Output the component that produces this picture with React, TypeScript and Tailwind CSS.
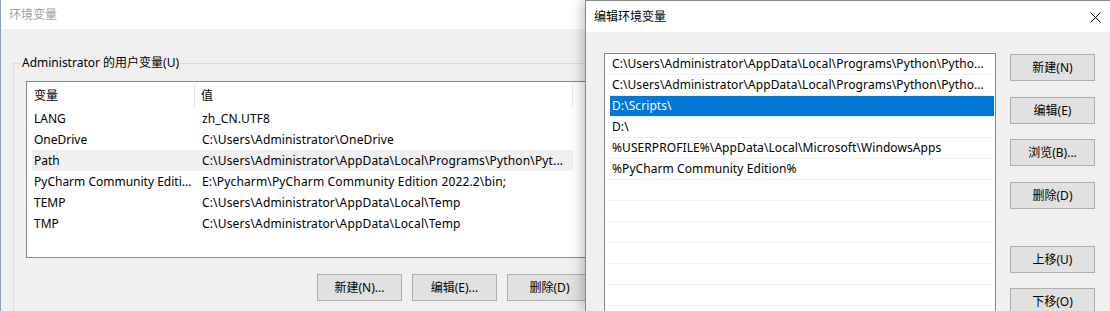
import React from 'react'

const font = { fontFamily: '"Noto Sans", "Noto Sans CJK SC", sans-serif' }

interface UserVar {
  name: string
  value: string
}

const userVars: UserVar[] = [
  { name: 'LANG', value: 'zh_CN.UTF8' },
  { name: 'OneDrive', value: 'C:\\Users\\Administrator\\OneDrive' },
  { name: 'Path', value: 'C:\\Users\\Administrator\\AppData\\Local\\Programs\\Python\\Pyt...' },
  { name: 'PyCharm Community Editi...', value: 'E:\\Pycharm\\PyCharm Community Edition 2022.2\\bin;' },
  { name: 'TEMP', value: 'C:\\Users\\Administrator\\AppData\\Local\\Temp' },
  { name: 'TMP', value: 'C:\\Users\\Administrator\\AppData\\Local\\Temp' },
]

const pathItems = [
  'C:\\Users\\Administrator\\AppData\\Local\\Programs\\Python\\Pytho...',
  'C:\\Users\\Administrator\\AppData\\Local\\Programs\\Python\\Pytho...',
  'D:\\Scripts\\',
  'D:\\',
  '%USERPROFILE%\\AppData\\Local\\Microsoft\\WindowsApps',
  '%PyCharm Community Edition%',
  '',
  '',
  '',
  '',
  '',
  '',
]

function WinButton({ label, className = '' }: { label: string; className?: string }) {
  return (
    <div
      className={`h-[27px] w-[85px] shrink-0 bg-[#e1e1e1] border border-[#adadad] text-[12px] text-black flex items-center justify-center ${className}`}
    >
      {label}
    </div>
  )
}

function EnvWindow() {
  return (
    <div className="absolute left-0 top-0 w-[640px] h-[311px] overflow-hidden border-l border-[#8fa2b5] flex flex-col">
      <div className="h-[29px] shrink-0 bg-white flex items-center pl-[8px] text-[12px] text-[#a0a0a0]">
        环境变量
      </div>
      <div className="flex-1 bg-[#f0f0f0] pl-[12px] pt-[34px] overflow-hidden">
        <div className="relative border-t border-l border-[#dcdcdc] h-[300px] pl-[12px] pt-[17px]">
          <span className="absolute left-[7px] top-[-9px] px-[1px] bg-[#f0f0f0] text-[12px] leading-[16px] text-black">
            Administrator 的用户变量(U)
          </span>
          <div className="w-[600px] h-[177px] border border-[#828790] bg-white">
            <div className="flex h-[26px] items-center pt-[1px]">
              <div className="w-[168px] h-[23px] pl-[7px] flex items-center border-r border-[#e5e5e5]">变量</div>
              <div className="w-[378px] h-[23px] pl-[6px] flex items-center border-r border-[#e5e5e5]">值</div>
            </div>
            {userVars.map((v) => (
              <div
                key={v.name}
                className={`flex h-[21px] items-center ml-[5px] w-[541px] ${v.name === 'Path' ? 'bg-[#f0f0f0]' : ''}`}
              >
                <div className="w-[170px] pl-[2px] whitespace-nowrap overflow-hidden">{v.name}</div>
                <div className="whitespace-nowrap overflow-hidden tracking-[0.15px]">{v.value}</div>
              </div>
            ))}
          </div>
          <div className="flex gap-[10px] pl-[291px] mt-[16px]">
            <WinButton label="新建(N)..." />
            <WinButton label="编辑(E)..." />
            <WinButton label="删除(D)" />
          </div>
        </div>
      </div>
    </div>
  )
}

function EditPathWindow() {
  return (
    <div className="absolute left-[585px] top-0 w-[525px] h-[311px] border-l border-t border-[#8a8a8a] flex flex-col shadow-[0_0_14px_rgba(0,0,0,0.35)]">
      <div className="h-[31px] shrink-0 bg-white flex items-center justify-between pl-[8px] pr-[9px] text-[12px] text-black">
        <span>编辑环境变量</span>
        <svg width="11" height="11" viewBox="0 0 11 11" className="mt-[1px]">
          <path d="M0.5 0.5 L10.5 10.5 M10.5 0.5 L0.5 10.5" stroke="#000" strokeWidth="1" fill="none" />
        </svg>
      </div>
      <div className="flex-1 bg-[#f0f0f0] flex pl-[18px] pt-[21px] gap-[14px] overflow-hidden">
        <div className="w-[392px] h-[300px] shrink-0 border border-[#828790] bg-white px-[1px] overflow-hidden">
          {pathItems.map((p, i) => (
            <div key={i} className="h-[21px] border-b border-[#f0f0f0] flex">
              <div
                className={`ml-[4px] flex-1 flex items-center pl-[2px] whitespace-nowrap tracking-[0.08px] ${
                  i === 2 ? 'bg-[#0078d7] text-white' : 'text-black'
                }`}
              >
                {p}
              </div>
            </div>
          ))}
        </div>
        <div className="flex flex-col pt-[1px]">
          <WinButton label="新建(N)" />
          <WinButton label="编辑(E)" className="mt-[16px]" />
          <WinButton label="浏览(B)..." className="mt-[15px]" />
          <WinButton label="删除(D)" className="mt-[16px]" />
          <WinButton label="上移(U)" className="mt-[37px]" />
          <WinButton label="下移(O)" className="mt-[15px]" />
        </div>
      </div>
    </div>
  )
}

export default function App() {
  return (
    <div className="relative w-[1110px] h-[311px] overflow-hidden bg-white text-[12px] text-black" style={font}>
      <EnvWindow />
      <EditPathWindow />
    </div>
  )
}
